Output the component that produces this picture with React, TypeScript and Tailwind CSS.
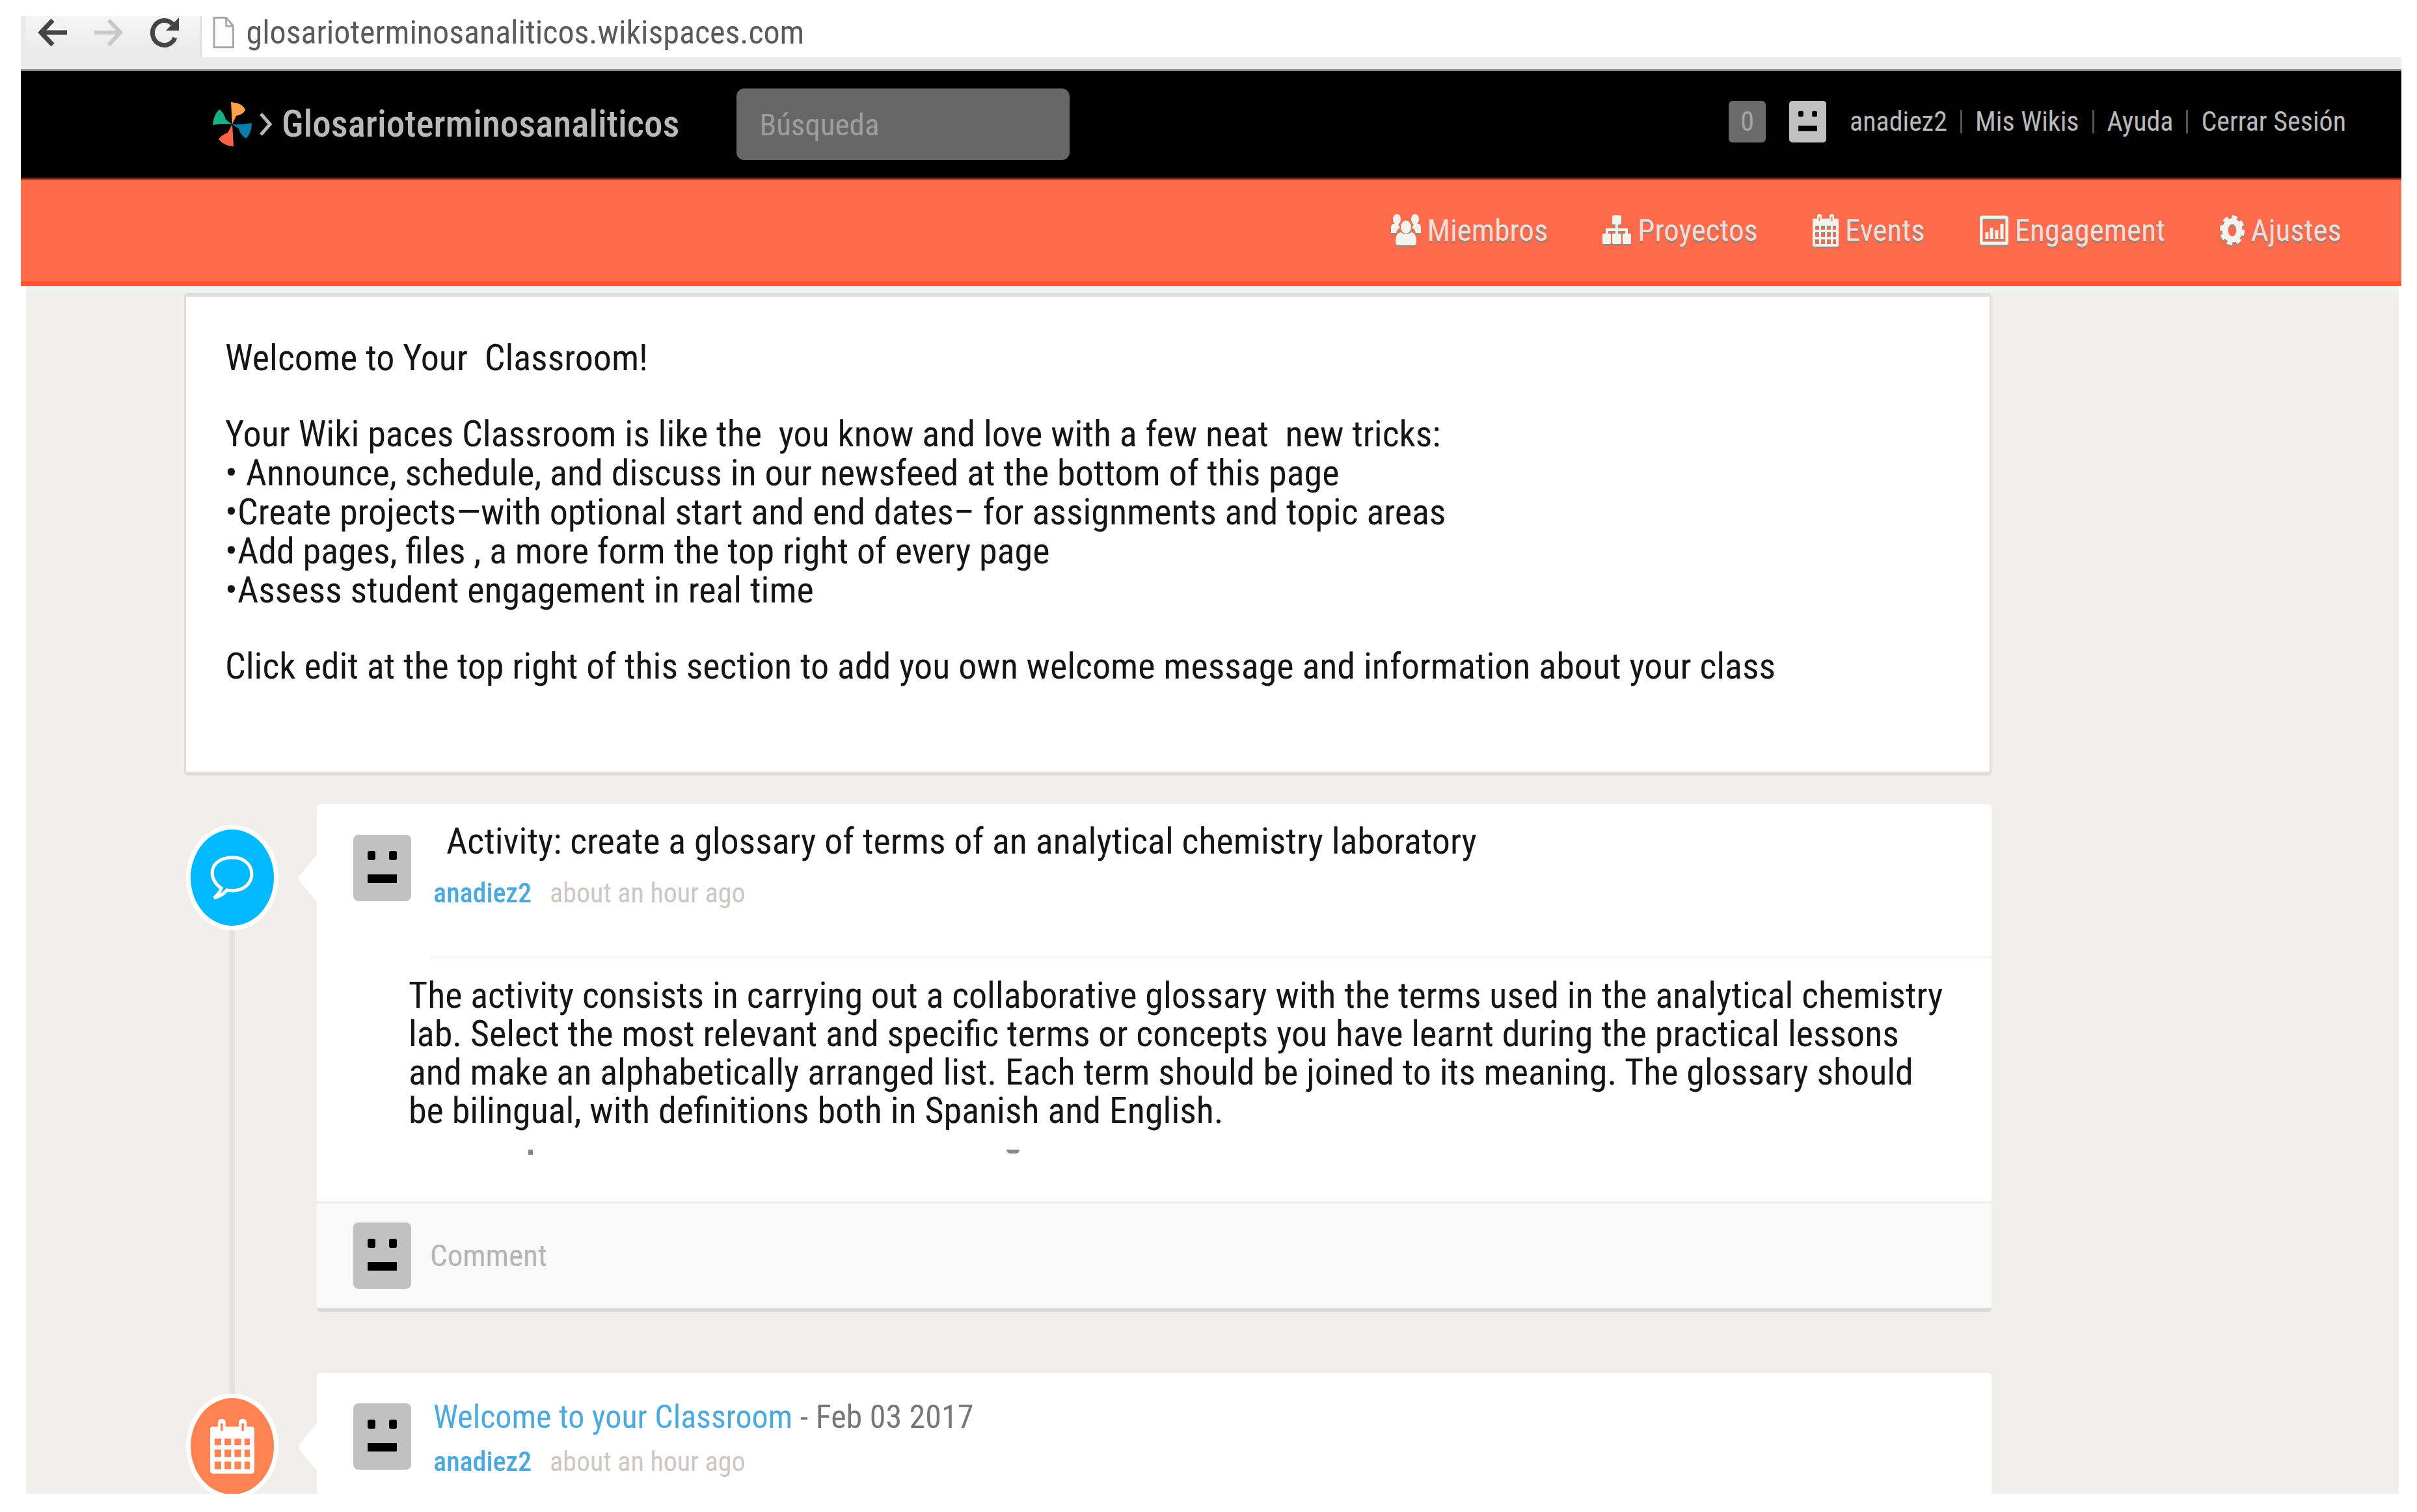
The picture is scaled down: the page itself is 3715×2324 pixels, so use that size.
import React from 'react';

const userLinks = ['anadiez2', 'Mis Wikis', 'Ayuda', 'Cerrar Sesión'];

const MembersIcon = () => (
  <svg className="h-[50px] w-[46px]" viewBox="0 0 46 50" fill="currentColor" aria-hidden="true">
    <ellipse cx="9" cy="8" rx="6" ry="8" />
    <ellipse cx="37" cy="8" rx="6" ry="8" />
    <path d="M0 29V22q0-7 4-7h7q1 4 3 6-5 2-6 8zM46 29V22q0-7-4-7h-7q-1 4-3 6 5 2 6 8z" />
    <ellipse cx="23" cy="20" rx="8" ry="10" />
    <path d="M7 43q0-14 8-15 8 6 16 0 8 1 8 15 0 5-5 5H12q-5 0-5-5z" />
  </svg>
);

const ProjectsIcon = () => (
  <svg className="h-[46px] w-[44px]" viewBox="0 0 44 46" aria-hidden="true">
    <path d="M22 12v18M7 31v-9h30v9" fill="none" stroke="currentColor" strokeWidth="4" />
    <g fill="currentColor">
      <rect x="15" width="14" height="14" rx="2" />
      <rect y="28" width="13" height="16" rx="2" />
      <rect x="15" y="28" width="14" height="16" rx="2" />
      <rect x="31" y="28" width="13" height="16" rx="2" />
    </g>
  </svg>
);

const EventsIcon = ({ className }: { className: string }) => (
  <svg className={className} viewBox="0 0 40 50" preserveAspectRatio="none" aria-hidden="true">
    <path fill="currentColor" fillRule="evenodd" d="M2 7H38Q40 7 40 10V47Q40 50 37 50H3Q0 50 0 47V10Q0 7 2 7ZM4 18V24H10V18ZM13 18V24H19V18ZM22 18V24H28V18ZM31 18V24H36V18ZM4 28V35H10V28ZM13 28V35H19V28ZM22 28V35H28V28ZM31 28V35H36V28ZM4 39V46H10V39ZM13 39V46H19V39ZM22 39V46H28V39ZM31 39V46H36V39Z" />
    <rect x="7" width="7" height="14" rx="3" fill="currentColor" />
    <rect x="26" width="7" height="14" rx="3" fill="currentColor" />
    <path d="M10.500 4v7M29.500 4v7" stroke="#ff7d55" strokeWidth="2" />
  </svg>
);

const EngagementIcon = () => (
  <svg className="h-[46px] w-[44px]" viewBox="0 0 44 46" fill="none" stroke="currentColor" aria-hidden="true">
    <rect x="2" y="3" width="40" height="40" rx="2" strokeWidth="5" />
    <path d="M11 36V26M18 36V19M26 36V23M34 36V13" strokeWidth="5" />
  </svg>
);

const SettingsIcon = () => (
  <svg className="h-[46px] w-[38px]" viewBox="0 0 38 46" aria-hidden="true">
    <ellipse cx="19" cy="23" rx="11" ry="14" fill="none" stroke="currentColor" strokeWidth="9" />
    <ellipse cx="19" cy="23" rx="16" ry="20" fill="none" stroke="currentColor" strokeWidth="6" strokeDasharray="8 6" />
  </svg>
);

const tabs = [
  { label: 'Miembros', icon: <MembersIcon /> },
  { label: 'Proyectos', icon: <ProjectsIcon /> },
  { label: 'Events', icon: <EventsIcon className="h-[50px] w-[40px]" /> },
  { label: 'Engagement', icon: <EngagementIcon /> },
  { label: 'Ajustes', icon: <SettingsIcon /> },
];

const Avatar = ({ className }: { className: string }) => (
  <svg className={className} viewBox="0 0 89 102" preserveAspectRatio="none" role="img" aria-label="anadiez2">
    <rect width="89" height="102" rx="8" fill="#c1c1c1" />
    <rect x="22" y="25" width="12" height="14" rx="3" />
    <rect x="55" y="25" width="12" height="14" rx="3" />
    <rect x="22" y="61" width="45" height="13" />
  </svg>
);

const BrowserBar = () => (
  <div className="border-b-[3px] border-[#8f8f8f] bg-[#ebebeb] pb-[18px]">
    <div className="flex">
      <div className="ml-2 flex h-16 w-[268px] shrink-0 items-center gap-10 bg-linear-to-b from-[#f6f6f6] to-[#e9e9e9] pb-3 pl-[18px]">
        <button aria-label="Back">
          <svg className="h-11 w-[46px]" viewBox="0 0 46 44" fill="none" stroke="#454545" strokeWidth="7">
            <path d="M23 3 5 22 23 41M6 22H45" />
          </svg>
        </button>
        <button aria-label="Forward">
          <svg className="h-11 w-[46px]" viewBox="0 0 46 44" fill="none" stroke="#c8c8c8" strokeWidth="6">
            <path d="M23 3 41 22 23 41M40 22H1" />
          </svg>
        </button>
        <button aria-label="Reload">
          <svg className="h-12 w-[46px]" viewBox="0 0 46 48" fill="none" stroke="#454545" strokeWidth="7">
            <path d="M39 32A18 19 0 1 1 36 12" />
            <path d="M45 1V21H25Z" fill="#454545" stroke="none" />
          </svg>
        </button>
      </div>
      <div className="flex h-16 flex-1 items-center gap-[18px] border-l-2 border-[#dcdcdc] bg-white pb-3 pl-[17px]">
        <svg className="h-[50px] w-[34px]" viewBox="0 0 34 50" fill="#fcfcfc" stroke="#a9a9a9" strokeWidth="3" aria-hidden="true">
          <path d="M2 2H21L32 15V48H2ZM21 2V15H32" />
        </svg>
        <input aria-label="Address" className="w-full text-[50px] leading-[60px] text-[#5a5a5a] outline-none" defaultValue="glosarioterminosanaliticos.wikispaces.com" />
      </div>
    </div>
  </div>
);

const TopBar = () => (
  <header className="flex h-[164px] items-center bg-black pr-[85px] pl-[295px] text-[#b9b9b9]">
    <a href="#" className="flex items-center">
      <svg className="h-[68px] w-[60px]" viewBox="0 0 60 68" aria-hidden="true">
        <path d="M28 0Q46 1 50 12 47 19 36 21L30 34Z" fill="#ffa04d" />
        <path d="M10 11Q18 17 20 27L30 34Q14 33 0 35 1 20 10 11Z" fill="#15b183" />
        <path d="M60 32Q60 48 51 56 42 50 40 41L30 34Q45 35 60 32Z" fill="#087da8" />
        <path d="M30 34 32 68Q18 68 9 57 14 50 23 47Z" fill="#ff6347" />
      </svg>
      <svg className="ml-3 h-9 w-[20px]" viewBox="0 0 20 36" fill="none" stroke="#b9b9b9" strokeWidth="5" aria-hidden="true">
        <path d="M2 2 16 18 2 34" />
      </svg>
      <span className="ml-[14px] text-[57px] leading-[60px] font-medium">Glosarioterminosanaliticos</span>
    </a>
    <input type="search" aria-label="Búsqueda" placeholder="Búsqueda" className="ml-[88px] h-[110px] w-[512px] rounded-xl bg-[#676767] px-[35px] text-[47px] outline-none placeholder:text-[#9d9d9d]" />
    <div className="ml-auto flex items-center pb-2 text-[42px] leading-[60px]">
      <button className="h-16 w-[57px] rounded-md bg-[#6b6b6b] text-[#a5a5a5]">0</button>
      <Avatar className="mx-9 h-16 w-[57px]" />
      <nav className="flex items-center gap-5">
        {userLinks.map((link, i) => (
          <React.Fragment key={link}>
            {i > 0 && <span className="h-9 w-[3px] bg-[#555]" />}
            <a href="#">{link}</a>
          </React.Fragment>
        ))}
      </nav>
    </div>
  </header>
);

const Tabs = () => (
  <nav className="flex h-[167px] items-center justify-end gap-[84px] border-t-[3px] border-b-8 border-t-[#6e2417] border-b-[#ff5430] bg-[#ff6a4c] pr-[92px] text-[47px] leading-[60px] text-[#fbdcd4]">
    {tabs.map((tab) => (
      <a key={tab.label} href="#" className="flex items-center gap-[10px] text-shadow-[0_3px_1px_#8e857b]">
        <span className="text-[#f3f3ee] drop-shadow-[0_3px_0_#9b8a7e]">{tab.icon}</span>
        {tab.label}
      </a>
    ))}
  </nav>
);

const Welcome = () => (
  <section className="rounded-md border-[3px] border-t-[6px] border-b-[6px] border-[#dfdedb] bg-white pt-16 pb-[132px] pl-[60px] text-[56px] leading-[60px] whitespace-pre-wrap text-[#151515]">
    <h1>Welcome to Your  Classroom!</h1>
    <p className="mt-[57px]">Your Wiki paces Classroom is like the  you know and love with a few neat  new tricks:</p>
    <ul>
      <li>• Announce, schedule, and discuss in our newsfeed at the bottom of this page</li>
      <li>•Create projects—with optional start and end dates– for assignments and topic areas</li>
      <li>•Add pages, files , a more form the top right of every page</li>
      <li>•Assess student engagement in real time</li>
    </ul>
    <p className="mt-[57px]">Click edit at the top right of this section to add you own welcome message and information about your class</p>
  </section>
);

interface PostProps {
  title: React.ReactNode;
  badge: React.ReactNode;
  badgeColor: string;
  className?: string;
  children?: React.ReactNode;
}

const Post = ({ title, badge, badgeColor, className = '', children }: PostProps) => (
  <div className="flex">
    <div className="flex w-[204px] shrink-0 flex-col items-center pr-[56px]">
      <div className={`mt-8 flex h-[162px] w-[142px] shrink-0 items-center justify-center rounded-[50%] border-[7px] border-white ${badgeColor}`}>
        {badge}
      </div>
      {/* runs on through the gap to the next badge */}
      {children && <div className="-mb-[125px] w-2 flex-1 bg-[#e3e2df]" />}
    </div>
    <article className={`relative flex-1 bg-white ${className}`}>
      <svg className="absolute top-[78px] -left-7 h-[72px] w-7" viewBox="0 0 28 72" fill="#fff" aria-hidden="true">
        <path d="M28 0 2 31Q-1 36 2 41L28 72Z" />
      </svg>
      <header className="flex pl-14">
        <Avatar className="mt-[47px] h-[102px] w-[89px] shrink-0" />
        <div className="ml-[34px] flex-1 pb-[71px]">
          {title}
          <p className="text-[42px] leading-[50px] text-[#cdc7c3]">
            <a href="#" className="font-medium text-[#4ba9de]">anadiez2</a>
            <span className="ml-7">about an hour ago</span>
          </p>
        </div>
      </header>
      {children}
    </article>
  </div>
);

export default function App() {
  return (
    <div className="bg-white pt-6 pr-6 pb-7 pl-8 font-['Roboto_Condensed','Liberation_Sans',sans-serif]">
      <BrowserBar />
      <TopBar />
      <Tabs />
      <main className="mr-1 ml-2 h-[1856px] overflow-hidden border-t-[10px] border-[#edf5f3] bg-[#f1efec] pr-[626px] pl-[243px]">
        <Welcome />
        <div className="mt-11">
          <Post
            title={<h2 className="pt-[27px] pb-[25px] pl-5 text-[56px] leading-[60px] text-[#151515]">Activity: create a glossary of terms of an analytical chemistry laboratory</h2>}
            badgeColor="bg-[#00b9ff]"
            className="rounded-md border-b-[7px] border-[#dddbd8]"
            badge={
              <svg className="h-[68px] w-[70px]" viewBox="0 0 70 68" fill="none" stroke="#fff" strokeWidth="5" aria-hidden="true">
                <path d="M18 50C-4 36-1 3 36 3S76 52 36 54Q30 54 27 53 18 63 7 65 16 58 18 50Z" />
              </svg>
            }
          >
            <hr className="ml-[174px] border-t-4 border-[#f6f6f6]" />
            <div className="pt-7 pl-[141px] text-[56px] leading-[59px] text-[#151515]">
              <p>
                The activity consists in carrying out a collaborative glossary with the terms used in the analytical chemistry<br />
                lab. Select the most relevant and specific terms or concepts you have learnt during the practical lessons<br />
                and make an alphabetically arranged list. Each term should be joined to its meaning. The glossary should<br />
                be bilingual, with definitions both in Spanish and English.
              </p>
              <div className="flex pt-[30px] pb-[71px] pl-[184px]">
                <span className="h-2 w-[7px] bg-[#888]" />
                <span className="ml-[728px] h-[6px] w-5 rounded-b-full bg-[#888]" />
              </div>
            </div>
            <footer className="flex h-[164px] items-center border-t-4 border-[#efefef] bg-[#f9f9f9] pl-14">
              <Avatar className="h-[102px] w-[89px]" />
              <input aria-label="Comment" placeholder="Comment" className="ml-[29px] flex-1 text-[47px] leading-[60px] outline-none placeholder:text-[#b4b4b4]" />
            </footer>
          </Post>
        </div>
        <div className="mt-[93px]">
          <Post
            title={<h2 className="pt-[38px] pb-[14px] text-[50px] leading-[60px] text-[#777]"><a href="#" className="text-[#4ba9de]">Welcome to your Classroom</a> - Feb 03 2017</h2>}
            badgeColor="bg-[#ff8352]"
            badge={<span className="text-white"><EventsIcon className="h-[84px] w-[68px]" /></span>}
            className="rounded-t-md"
          />
        </div>
      </main>
    </div>
  );
}
